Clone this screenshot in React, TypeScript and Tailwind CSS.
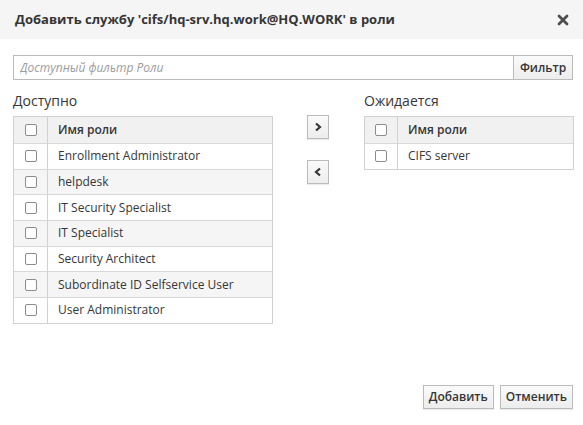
import React from "react";

const AVAILABLE = [
  "Enrollment Administrator",
  "helpdesk",
  "IT Security Specialist",
  "IT Specialist",
  "Security Architect",
  "Subordinate ID Selfservice User",
  "User Administrator",
];

const PENDING = ["CIFS server"];

function Checkbox() {
  return (
    <span className="block h-[12px] w-[12px] rounded-[2px] border border-[#8c8c8c] bg-white" />
  );
}

function RoleTable({ rows, checkWidth }: { rows: string[]; checkWidth: string }) {
  return (
    <div className="border border-[#d1d1d1] text-[12px] text-[#363636]">
      <div className="flex h-[26px] bg-[#f1f1f1] font-semibold">
        <div className={`${checkWidth} flex shrink-0 items-center justify-center border-r border-[#d1d1d1]`}>
          <Checkbox />
        </div>
        <div className="flex items-center pl-[10px]">Имя роли</div>
      </div>
      {rows.map((row, i) => (
        <div
          key={row}
          className={`flex h-[25.7px] border-t border-[#d8d8d8] ${i % 2 === 1 ? "bg-[#f5f5f5]" : "bg-white"}`}
        >
          <div className={`${checkWidth} flex shrink-0 items-center justify-center border-r border-[#d1d1d1]`}>
            <Checkbox />
          </div>
          <div className="flex items-center pl-[10px]">{row}</div>
        </div>
      ))}
    </div>
  );
}

function ArrowButton({ dir }: { dir: "right" | "left" }) {
  return (
    <button className="flex h-[24px] w-[22px] items-center justify-center border border-[#bbbbbb] bg-gradient-to-b from-[#fafafa] to-[#ededed] shadow-[0_1px_1px_rgba(0,0,0,0.08)]">
      <svg width="8" height="10" viewBox="0 0 8 10">
        <polyline
          points={dir === "right" ? "2,1.5 6,5 2,8.5" : "6,1.5 2,5 6,8.5"}
          fill="none"
          stroke="#363636"
          strokeWidth="2.2"
        />
      </svg>
    </button>
  );
}

function FooterButton({ children }: { children: React.ReactNode }) {
  return (
    <button className="flex h-[24px] items-center border border-[#bbbbbb] bg-gradient-to-b from-[#fafafa] to-[#ededed] px-[5px] text-[12px] font-semibold text-[#363636] shadow-[0_1px_1px_rgba(0,0,0,0.08)]">
      {children}
    </button>
  );
}

export default function App() {
  return (
    <div
      className="h-[425px] w-[583px] overflow-hidden bg-white text-[#363636]"
      style={{ fontFamily: '"Open Sans", "Noto Sans", sans-serif' }}
    >
      <div className="flex h-[39px] items-center justify-between bg-[#f5f5f5] pl-[15px] pr-[14px]">
        <h1 className="text-[13px] font-bold text-[#363636]">
          Добавить службу 'cifs/hq-srv.hq.work@HQ.WORK' в роли
        </h1>
        <svg width="12" height="12" viewBox="0 0 12 12">
          <path d="M2 2 L10 10 M10 2 L2 10" stroke="#4d4d4d" strokeWidth="2.8" strokeLinecap="round" />
        </svg>
      </div>

      <div className="pl-[13px] pr-[10px]">
        <div className="mt-[16px] flex h-[25px]">
          <input
            className="h-full min-w-0 flex-1 border border-[#bbbbbb] px-[6px] text-[12px] italic outline-none placeholder:text-[#9c9c9c]"
            placeholder="Доступный фильтр Роли"
          />
          <button className="h-full w-[59px] shrink-0 border border-l-0 border-[#bbbbbb] bg-gradient-to-b from-[#fafafa] to-[#ededed] text-[12px] font-semibold text-[#363636]">
            Фильтр
          </button>
        </div>

        <div className="mt-[11px] flex">
          <div className="w-[260px] shrink-0">
            <div className="mb-[5px] h-[20px] text-[14px] leading-[20px] text-[#363636]">Доступно</div>
            <RoleTable rows={AVAILABLE} checkWidth="w-[34px]" />
          </div>

          <div className="ml-[34px] flex w-[22px] shrink-0 flex-col gap-[21px] pt-[24px]">
            <ArrowButton dir="right" />
            <ArrowButton dir="left" />
          </div>

          <div className="ml-[35px] w-[210px] shrink-0">
            <div className="mb-[5px] h-[20px] text-[14px] leading-[20px] text-[#363636]">Ожидается</div>
            <RoleTable rows={PENDING} checkWidth="w-[33px]" />
          </div>
        </div>

        <div className="mt-[61px] flex justify-end gap-[6px]">
          <FooterButton>Добавить</FooterButton>
          <FooterButton>Отменить</FooterButton>
        </div>
      </div>
    </div>
  );
}
